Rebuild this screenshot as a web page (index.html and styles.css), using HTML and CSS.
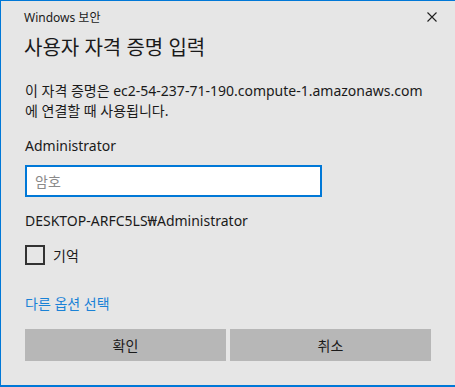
FILE: index.html
```html
<!DOCTYPE html>
<html lang="ko">
<head>
    <meta charset="UTF-8">
    <title>Windows 보안</title>
    <link rel="stylesheet" href="styles.css">
</head>
<body>
    <div class="dialog">
        <div class="titlebar">
            <span class="title">Windows 보안</span>
            <button class="close-btn" aria-label="닫기">
                <svg width="10" height="10" viewBox="0 0 10 10">
                    <path d="M0.5 0.5 L9.5 9.5 M9.5 0.5 L0.5 9.5" stroke="#1f1f1f" stroke-width="1.1" fill="none"/>
                </svg>
            </button>
        </div>
        <div class="content">
            <h1>사용자 자격 증명 입력</h1>
            <p class="desc">이 자격 증명은 ec2-54-237-71-190.compute-1.amazonaws.com<br>에 연결할 때 사용됩니다.</p>
            <div class="user">Administrator</div>
            <input type="password" class="password" placeholder="암호">
            <div class="domain">DESKTOP-ARFC5LS₩Administrator</div>
            <label class="remember">
                <span class="checkbox"></span>
                <span>기억</span>
            </label>
            <a class="more" href="#">다른 옵션 선택</a>
            <div class="actions">
                <button class="action">확인</button>
                <button class="action">취소</button>
            </div>
        </div>
    </div>
</body>
</html>
```

FILE: styles.css
```css
html, body {
    margin: 0;
    padding: 0;
}
body {
    font-family: "Segoe UI", "Noto Sans", "Noto Sans CJK KR", sans-serif;
    color: #1a1a1a;
    background: #e6e6e6;
}
.dialog {
    box-sizing: border-box;
    width: 455px;
    height: 387px;
    background: #e6e6e6;
    border-top: 1px solid #0078d7;
    border-left: 1px solid #0078d7;
    border-bottom: 2px solid #0078d7;
}
.titlebar {
    display: flex;
    justify-content: space-between;
    align-items: center;
    height: 31px;
    padding-left: 23px;
}
.title {
    font-size: 12px;
}
.close-btn {
    background: none;
    border: none;
    padding: 0;
    width: 46px;
    height: 31px;
    display: flex;
    align-items: center;
    justify-content: center;
}
.content {
    padding: 0 23px 0 24px;
}
h1 {
    font-size: 20px;
    font-weight: normal;
    margin: 2px 0 0 -1px;
    line-height: 28px;
}
.desc {
    font-size: 14px;
    line-height: 20px;
    margin: 19px 0 0;
}
.user {
    font-size: 14px;
    line-height: 20px;
    margin-top: 15px;
}
.password {
    display: block;
    box-sizing: border-box;
    width: 297px;
    height: 32px;
    margin-top: 9px;
    border: 2px solid #0078d7;
    background: #fff;
    padding: 0 8px;
    font: inherit;
    font-size: 14px;
    outline: none;
}
.password::placeholder {
    color: #8a8a8a;
}
.domain {
    font-size: 14px;
    line-height: 20px;
    margin-top: 14px;
}
.remember {
    display: flex;
    align-items: center;
    gap: 8px;
    margin-top: 14px;
    font-size: 14px;
}
.checkbox {
    box-sizing: border-box;
    width: 20px;
    height: 20px;
    border: 2px solid #333;
}
.more {
    display: block;
    margin-top: 29px;
    font-size: 14px;
    line-height: 20px;
    color: #1a82d6;
    text-decoration: none;
}
.actions {
    display: flex;
    gap: 4px;
    margin-top: 15px;
}
.action {
    width: 201px;
    height: 32px;
    border: none;
    background: #b7b7b7;
    color: #1a1a1a;
    font: inherit;
    font-size: 14px;
}
```
